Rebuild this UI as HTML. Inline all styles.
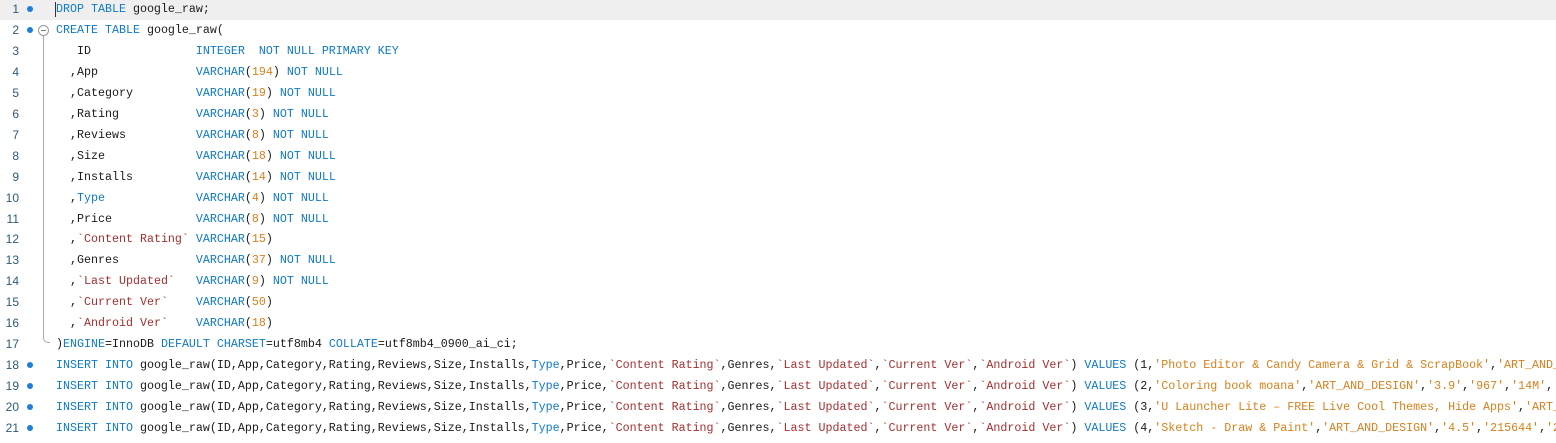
<html><head><style>
body{margin:0;width:1556px;height:443px;overflow:hidden;background:#fff;font-family:"Liberation Mono",monospace;font-size:11.67px;color:#1a1a1a}
.l{position:absolute;left:0;width:1556px;height:21px;line-height:21px;overflow:hidden}
.n{position:absolute;left:0;width:19px;text-align:right;color:#2e5a7a;font-family:"Liberation Sans",sans-serif;font-size:12px}
.d{position:absolute;left:27px;top:7px;width:6px;height:6px;border-radius:50%;background:#1f7fd8}
.c{position:absolute;left:56px;white-space:pre}
.k{color:#0f7ac6}.o{color:#d8801c}.r{color:#a33030}
</style></head><body>
<div style="position:absolute;left:0;top:-1px;width:1556px;height:21px;background:#efefef"></div>
<div style="position:absolute;left:55px;top:2px;width:1px;height:15px;background:#333"></div>
<div style="position:absolute;left:43px;top:36px;width:1px;height:302px;background:#aaa"></div>
<div style="position:absolute;left:43px;top:336px;width:6px;height:6px;border-left:1px solid #aaa;border-bottom:1px solid #aaa;border-bottom-left-radius:5px"></div>
<div style="position:absolute;left:38px;top:25px;width:9px;height:9px;border:1px solid #999;border-radius:50%;background:#fff"><div style="position:absolute;left:2px;top:4px;width:5px;height:1px;background:#777"></div></div>
<div id="w"></div>
<script>
var L=[
'<span class=k>DROP TABLE</span> google_raw;',
'<span class=k>CREATE TABLE</span> google_raw(',
'   ID               <span class=k>INTEGER  NOT NULL PRIMARY KEY</span>',
'  ,App              <span class=k>VARCHAR</span>(<span class=o>194</span>) <span class=k>NOT NULL</span>',
'  ,Category         <span class=k>VARCHAR</span>(<span class=o>19</span>) <span class=k>NOT NULL</span>',
'  ,Rating           <span class=k>VARCHAR</span>(<span class=o>3</span>) <span class=k>NOT NULL</span>',
'  ,Reviews          <span class=k>VARCHAR</span>(<span class=o>8</span>) <span class=k>NOT NULL</span>',
'  ,Size             <span class=k>VARCHAR</span>(<span class=o>18</span>) <span class=k>NOT NULL</span>',
'  ,Installs         <span class=k>VARCHAR</span>(<span class=o>14</span>) <span class=k>NOT NULL</span>',
'  ,<span class=k>Type</span>             <span class=k>VARCHAR</span>(<span class=o>4</span>) <span class=k>NOT NULL</span>',
'  ,Price            <span class=k>VARCHAR</span>(<span class=o>8</span>) <span class=k>NOT NULL</span>',
'  ,<span class=r>`Content Rating`</span> <span class=k>VARCHAR</span>(<span class=o>15</span>)',
'  ,Genres           <span class=k>VARCHAR</span>(<span class=o>37</span>) <span class=k>NOT NULL</span>',
'  ,<span class=r>`Last Updated`</span>   <span class=k>VARCHAR</span>(<span class=o>9</span>) <span class=k>NOT NULL</span>',
'  ,<span class=r>`Current Ver`</span>    <span class=k>VARCHAR</span>(<span class=o>50</span>)',
'  ,<span class=r>`Android Ver`</span>    <span class=k>VARCHAR</span>(<span class=o>18</span>)',
')<span class=k>ENGINE</span>=InnoDB <span class=k>DEFAULT CHARSET</span>=utf8mb4 <span class=k>COLLATE</span>=utf8mb4_0900_ai_ci;'];
var H='<span class=k>INSERT INTO</span> google_raw(ID,App,Category,Rating,Reviews,Size,Installs,<span class=k>Type</span>,Price,<span class=r>`Content Rating`</span>,Genres,<span class=r>`Last Updated`</span>,<span class=r>`Current Ver`</span>,<span class=r>`Android Ver`</span>) <span class=k>VALUES</span> (';
var V=["1,<span class=o>'Photo Editor &amp; Candy Camera &amp; Grid &amp; ScrapBook'</span>,<span class=o>'ART_AND_DESIGN'</span>",
"2,<span class=o>'Coloring book moana'</span>,<span class=o>'ART_AND_DESIGN'</span>,<span class=o>'3.9'</span>,<span class=o>'967'</span>,<span class=o>'14M'</span>,<span class=o>'500,000+'</span>",
"3,<span class=o>'U Launcher Lite – FREE Live Cool Themes, Hide Apps'</span>,<span class=o>'ART_AND_DESIGN'</span>",
"4,<span class=o>'Sketch - Draw &amp; Paint'</span>,<span class=o>'ART_AND_DESIGN'</span>,<span class=o>'4.5'</span>,<span class=o>'215644'</span>,<span class=o>'25M'</span>"];
V.forEach(function(v){L.push(H+v)});
var dots=[1,2,18,19,20,21],s='';
L.forEach(function(t,i){var n=i+1;s+='<div class=l style="top:'+(-1+i*20.95)+'px"><span class=n>'+n+'</span>'+(dots.indexOf(n)>=0?'<span class=d></span>':'')+'<span class=c>'+t+'</span></div>'});
document.getElementById('w').innerHTML=s;
</script>
</body></html>
